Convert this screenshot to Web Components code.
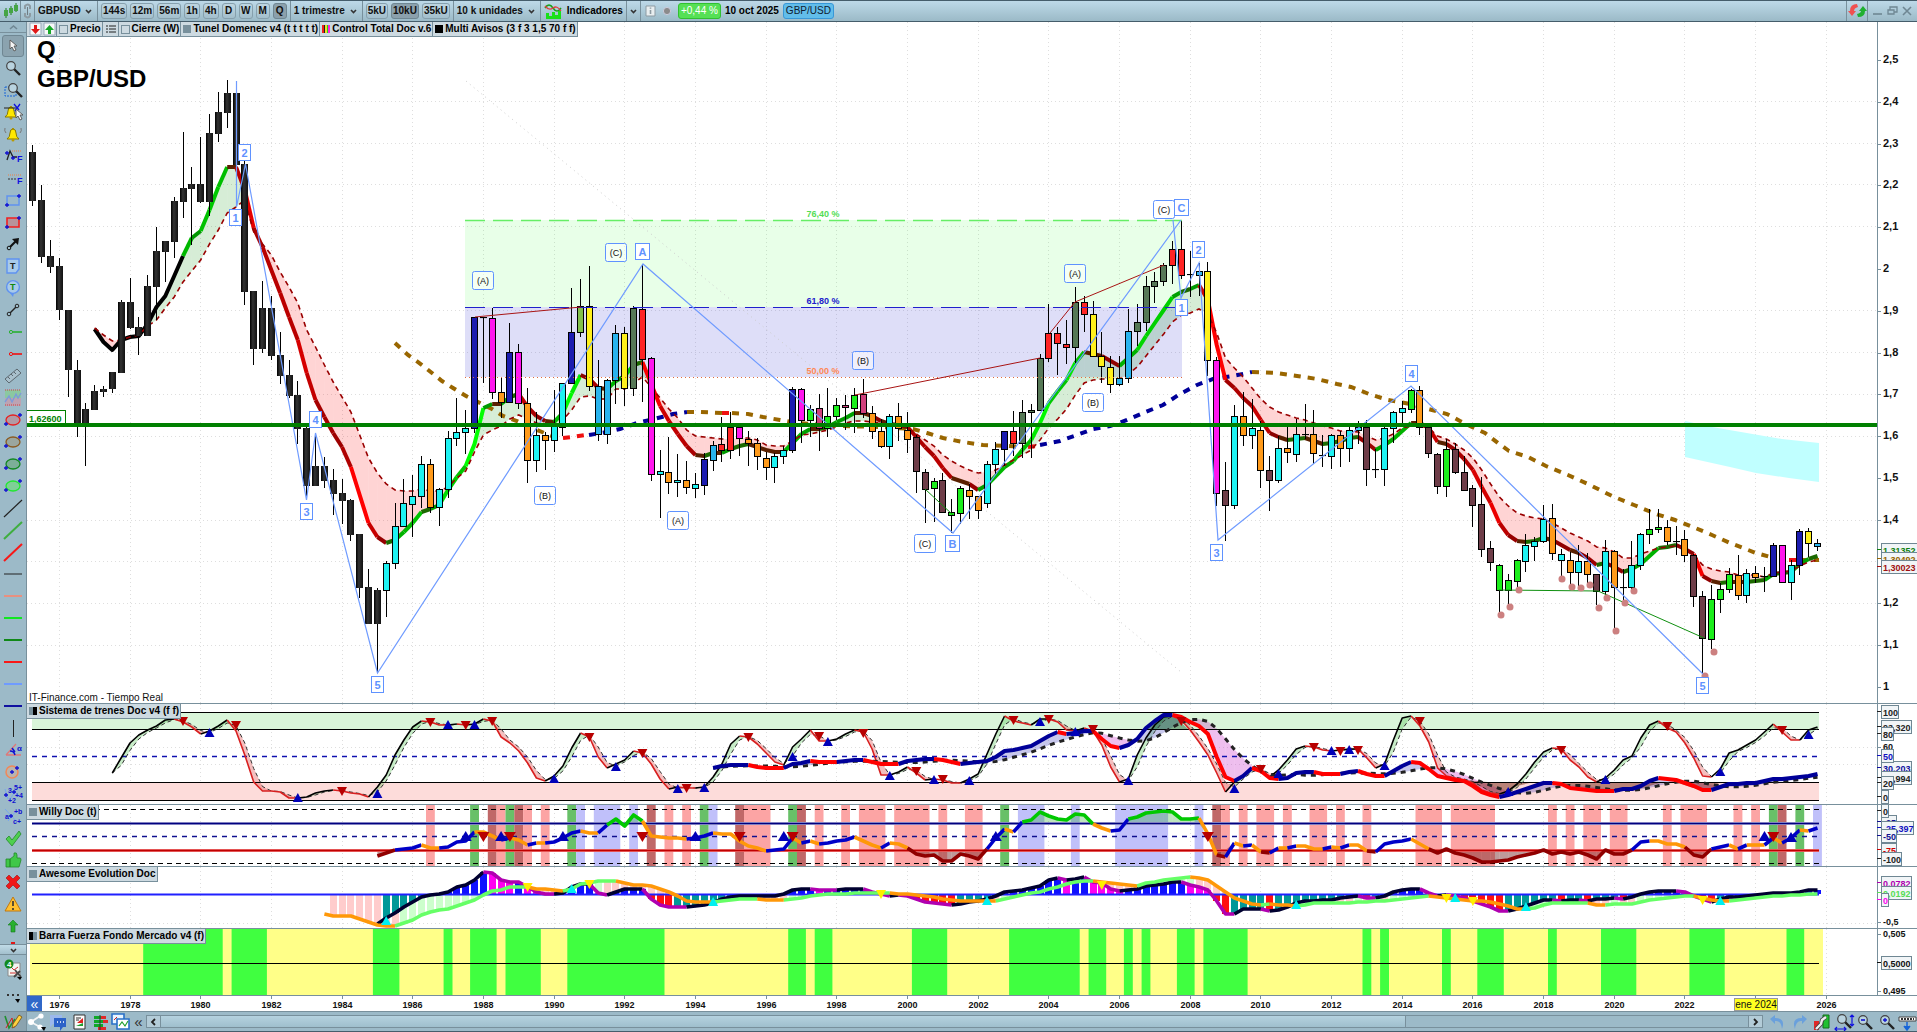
<!DOCTYPE html>
<html lang="es">
<head>
<meta charset="utf-8">
<title>GBP/USD</title>
<style>
    html, body {
        margin: 0;
        height: 100%;
        overflow: hidden;
        font: 10px/14px "Liberation Sans", Arial, sans-serif;
        color: #000;
    }
</style>
</head>
<body>
<chart-app></chart-app>

<script>
    // ---------- icons (27 x 22 box) ----------
    const plus = (x, y, c = '#1010d0') => `<path d="M${x - 2} ${y}h4M${x} ${y - 2}v4" stroke="${c}" stroke-width="1.3"/>`;
    const hline = (c, w = 2) => `<path d="M4 11h18" stroke="${c}" stroke-width="${w}"/>`;
    const diag = (c, w = 2) => `<path d="M4 20L22 3" stroke="${c}" stroke-width="${w}"/>`;
    const ellipse = (c, f) => `<ellipse cx="13" cy="11" rx="7" ry="5" fill="${f}" stroke="${c}" stroke-width="1.3"/>${plus(6, 15)}${plus(20, 6)}`;
    const glass = (x, y) => `<path d="M${x + 3} ${y + 3}l6 6" stroke="#222" stroke-width="2.4"/><circle cx="${x}" cy="${y}" r="4.3" fill="#b9d3df" stroke="#444" stroke-width="1.2"/>`;
    const bell = (x, y) => `<path d="M${x - 6} ${y + 5}q3-2 3-6q0-4 3-4t3 4q0 4 3 6z" fill="#ffe800" stroke="#8a7a00"/><circle cx="${x}" cy="${y + 6}" r="1.5" fill="#b89a00"/><path d="M${x - 1} ${y - 6}h2v2h-2z" fill="#a89000"/>`;
    const pointer = (x, y) => `<path d="M${x} ${y}v9l2-2 2 4 2-1-2-4h3z" fill="#f4f4f4" stroke="#555" stroke-width=".9"/>`;
    const letter = (x, y, t, c, s = 9) => `<text x="${x}" y="${y}" font-size="${s}" font-weight="700" fill="${c}">${t}</text>`;

    const ICONS = {
        cursor: pointer(10, 5),
        zoom: glass(11, 9),
        zoomArea: '<path d="M5 8h11v9H5z" fill="none" stroke="#1765d8" stroke-dasharray="2 1"/>' + glass(13, 9),
        alertTool: bell(11, 11) + '<path d="M4 7h13" stroke="#222"/><path d="M14 3l5 6M20 3l-5 7" stroke="#1010e0" stroke-width="1.3"/>' + pointer(16, 8),
        bell: bell(13, 11) + '<path d="M5 5q-1 3 1 5M21 5q1 3-1 5" stroke="#777" fill="none"/>',
        fibExt: '<path d="M12 6h9" stroke="#f08040" stroke-dasharray="1 1"/><path d="M7 15l3-9 3 6h4" fill="none" stroke="#222" stroke-width="1.3"/>' + plus(7, 8) + plus(13, 13) + letter(17, 17, 'F', '#1010e0'),
        fib: '<path d="M8 8h13" stroke="#f08040" stroke-dasharray="1 1"/><path d="M8 12h9" stroke="#333" stroke-dasharray="2 1"/>' + letter(17, 17, 'F', '#1010e0'),
        rectBlue: '<path d="M7 7h12v9H7z" fill="none" stroke="#5f92f0" stroke-width="1.4"/>' + plus(7, 16) + plus(19, 7),
        rectRed: '<path d="M7 7h12v9H7z" fill="#b8939b" stroke="#f02020" stroke-width="1.6"/>' + plus(7, 16) + plus(19, 7),
        arrow: '<circle cx="9" cy="15" r="1.8" fill="none" stroke="#111"/><path d="M10 14l6-6" stroke="#111" stroke-width="2.2"/><path d="M12 6l7-1-1 7z" fill="#111"/>',
        text: '<path d="M7 4h12v10l-3 4H7z" fill="#a8caea" stroke="#5f92f0" stroke-width="1.4"/>' + letter(10, 14, 'T', '#222'),
        note: '<circle cx="13" cy="10" r="6.4" fill="#a8caea" stroke="#5f92f0" stroke-width="1.4"/><path d="M10 16l3 4 1-4" fill="#5f92f0"/>' + letter(10, 13, 'T', '#118811'),
        segment: '<path d="M10 14l6-6" stroke="#222" stroke-width="1.4"/><circle cx="9" cy="15" r="1.8" fill="none" stroke="#222"/><circle cx="17" cy="7" r="1.8" fill="none" stroke="#222"/>',
        rayGreen: '<circle cx="11" cy="11" r="1.6" fill="none" stroke="#28b030"/><path d="M13 11h9" stroke="#28b030" stroke-width="1.6"/>',
        rayRed: '<circle cx="11" cy="11" r="1.6" fill="none" stroke="#f01010"/><path d="M13 11h9" stroke="#f01010" stroke-width="1.6"/>',
        ruler: '<path d="M5 14L17 4l4 4L9 18z" fill="#a9c0cc" stroke="#5c6870"/><path d="M8 12l2 2M11 9l2 2M14 7l2 2" stroke="#5c6870"/>',
        channel: '<path d="M5 3h16v8H5z" fill="#8bc8a0"/><path d="M5 11h16v8H5z" fill="#bda3b2"/><path d="M5 3h16M5 18h16" stroke="#d04040" stroke-dasharray="1 1"/><path d="M5 15l4-6 3 6 4-8 2 4 3-5" fill="none" stroke="#7d9bd8" stroke-width="1.4"/>',
        ellRed: ellipse('#e82020', '#b29aa4'),
        ellBrown: ellipse('#8a5a20', '#9ba69e'),
        ellGreen: ellipse('#118820', '#7cae98'),
        ellLime: ellipse('#20e830', '#7fcf96'),
        diagBlack: diag('#222', 1.2), diagGreen: diag('#3fae3f'), diagRed: diag('#f81818'),
        hBlack: hline('#222', 1), hSalmon: hline('#e89080'), hLime: hline('#10e820'), hGreen: hline('#108818'),
        hRed: hline('#f81818'), hSky: hline('#6f9bff'), hNavy: hline('#1010a0'),
        vline: '<path d="M13.5 3v17" stroke="#222"/>',
        angle: '<path d="M6 16h15M6 16L16 5" stroke="#e07878" stroke-width="1.3"/><path d="M10 12q4 0 5 4M12 9l3 4" fill="none" stroke="#1010d0" stroke-width="1.5"/>' + letter(17, 12, 'α', '#1010d0', 8),
        circle: '<circle cx="12" cy="11" r="6" fill="#b9b4ae" stroke="#f08858" stroke-width="1.5"/>' + plus(12, 11) + plus(17, 7),
        elliott: '<path d="M5 6l3 10M9 18l8-13M14 8l5 6" stroke="#78a5ef"/>' + letter(8, 10, '3', '#1010d0', 7) + letter(14, 7, '5+', '#1010d0', 7) + plus(6, 12) + plus(14, 9) + letter(8, 20, '+2', '#1010d0', 7) + letter(15, 15, '+4', '#1010d0', 7),
        abc: '<path d="M5 4l12 13M8 16l8-10" stroke="#78a5ef"/>' + letter(5, 14, 'a', '#1010d0', 7) + plus(11, 11) + letter(14, 9, '+b', '#1010d0', 7) + letter(13, 19, 'c+', '#1010d0', 7),
        check: '<path d="M6 12l3-3 3 4 7-9 2 3-9 12z" fill="#4fd050" stroke="#258a2a" stroke-width=".8"/>',
        thumb: '<path d="M6 10h4v8H6zM10 10l4-3V4q3-1 3 2v3h3q1 0 1 2l-2 7H10z" fill="#40c848" stroke="#258a2a" stroke-width=".8"/>',
        cross: '<path d="M6 7l3-3 4 4 4-4 3 3-4 4 4 4-3 3-4-4-4 4-3-3 4-4z" fill="#f01818" stroke="#a01010" stroke-width=".6"/>',
        warn: '<path d="M13 4l8 14H5z" fill="#ffc030" stroke="#c07810" stroke-linejoin="round"/><path d="M13 8v5M13 15v2" stroke="#333" stroke-width="1.6"/>',
        up: '<path d="M13 5l5 5h-3v7h-4v-7H8z" fill="#28b030" stroke="#157a1c" stroke-width=".6"/>',
        down: '<path d="M11 5h4v7h3l-5 5-5-5h3z" fill="#e01818"/>',
        orders: '<path d="M8 5h12v13H8z" fill="#f2f5f2" stroke="#888"/><path d="M10 8l4 4 4-3M10 15h7" stroke="#d03030" fill="none"/><path d="M15 12l6 7M14 19l6-6" stroke="#444" stroke-width="1.8"/><circle cx="9" cy="6" r="4.5" fill="#118a20"/>' + letter(7, 9, '4', '#fff', 8) + '<path d="M17 19h5l-2 3z" fill="#000"/>',
        more: '<path d="M7 8h2v2H7zM12 8h2v2h-2zM17 8h2v2h-2z" fill="#333"/><path d="M15 13h5l-2 4z" fill="#000"/>',
        pencil: '<path d="M5 5l4 12 6-9" fill="none" stroke="#209030" stroke-width="1.6"/><path d="M6 17l6-10 2 10" fill="none" stroke="#d02020"/><path d="M12 17l1-4 6-9 3 2-6 9z" fill="#ffd040" stroke="#705010" stroke-width=".8"/>',
        share: '<path d="M16 5L7 11l9 5" stroke="#f5f5f5" stroke-width="1.8" fill="none"/><circle cx="17" cy="5" r="2.6" fill="#fff"/><circle cx="7" cy="11" r="3" fill="#fff"/><circle cx="16" cy="16" r="2.6" fill="#fff"/><path d="M17 16h5l-2 4z" fill="#000"/>',
        chat: '<path d="M5 4h12v9H8l-3 3z" fill="#9cb8ec"/><path d="M9 7h12v9h-3l-3 4v-4H9z" fill="#2d62c8"/><path d="M12 11h1M15 11h1M18 11h1" stroke="#fff" stroke-width="1.4"/>',
        report: '<path d="M8 4h11v14H8z" fill="#fafafa" stroke="#333"/><path d="M10 7h5M10 9h3" stroke="#333"/><path d="M11 12l6-5v5z" fill="#e02020"/><path d="M10 15h7v-3z" fill="#20a030"/>',
        book: '<path d="M7 5h8v3H7zM7 9h12v3H7zM7 13h9v3H7z" fill="#10a828"/><path d="M14 5h5v3h-5zM16 9h5v3h-5zM11 16h8v3h-8z" fill="#e02828"/><path d="M13 4v15" stroke="#333"/>',
        windows: '<path d="M5 3h12v10H5z" fill="#e8f4ff" stroke="#2870c8" stroke-width="1.6"/><path d="M10 8h12v10H10z" fill="#fff" stroke="#2870c8" stroke-width="1.6"/><path d="M12 15l3-4 3 4 3-5" fill="none" stroke="#20a030" stroke-width="1.2"/><path d="M7 9l3-3" stroke="#d02020"/>',
        undo: '<path d="M11 4L6 8l5 5v-3q6-1 7 8q4-11-7-11z" fill="#6aa0dc"/>',
        redo: '<path d="M16 4l5 4-5 5v-3q-6-1-7 8q-4-11 7-11z" fill="#6aa0dc"/>',
        settings: '<path d="M6 10h5v9H6z" fill="#e02828"/><path d="M15 4h6v13h-6z" fill="#20c030" stroke="#117018"/><path d="M8 18l5-5 1-4 4-3" stroke="#444" stroke-width="4"/><path d="M8 18l5-5 1-4 4-3" stroke="#eee" stroke-width="2.4"/>',
        fit: glass(12, 8) + '<path d="M22 4v11M20 6l2-2 2 2M20 13l2 2 2-2M5 18h11M7 16l-2 2 2 2M14 16l2 2-2 2" fill="none" stroke="#1010e0" stroke-width="1.2"/>',
        zoomOut: glass(12, 9) + '<path d="M10 9h4" stroke="#1010d0" stroke-width="1.6"/>',
        zoomIn: glass(12, 9) + plus(12, 9),
        keyboard: '<path d="M5 6h17v4H5z" fill="#fff" stroke="#444"/><path d="M7 8h13" stroke="#333" stroke-width="2" stroke-dasharray="2 1"/><path d="M13 11v6M10 15l3 4 3-4" stroke="#1765d8" fill="#1765d8" stroke-width="1.5"/>',
        candles: '<path d="M9 8v10M14 6v9M19 3v9" stroke="#1d7a1d"/><path d="M7 10h4v6H7zM12 8h4v5h-4zM17 5h4v6h-4z" fill="#45a545"/>',
        link: '<path d="M11 9V6q3-3 5 0v3M11 13v3q3 3 5 0v-3" fill="none" stroke="#8d9ba2" stroke-width="2"/><path d="M13.5 7v8" stroke="#6d7b82"/>',
        indicators: '<path d="M5 8q4-6 8 0t8 0" fill="none" stroke="#15a015" stroke-width="1.5"/><path d="M5 6q4 5 8 2t8 3" fill="none" stroke="#e04040" stroke-width="1.3"/><path d="M6 19v-6h3v3h3v-4h3v3h3v-4h3v8z" fill="#18e018"/>',
        info: '<path d="M9 6h9v10H9z" fill="#e8eef0" stroke="#8d9ba2"/><path d="M13.5 10v4M13.5 7.500v1.200" stroke="#8d9ba2" stroke-width="1.6"/>',
        dot: '<circle cx="13" cy="11" r="3.6" fill="#8b8b8b" stroke="#ccd"/>',
        sync: '<path d="M13 4q-7 0-7 7H4l4 5 4-5h-2q0-3 4-4z" fill="#f05050"/><path d="M14 17q7 0 7-6h2l-4-5-4 5h2q0 2-4 3z" fill="#20b030"/>',
        sheetDown: '<path d="M8 5h11v12H8z" fill="#f6f8f8" stroke="#9ab"/><path d="M12 7h3v4h3l-4.500 5-4.500-5h3z" fill="#e01818"/>',
        sheetUp: '<path d="M8 5h11v12H8z" fill="#f6f8f8" stroke="#9ab"/><path d="M12 16h3v-4h3l-4.500-5-4.500 5h3z" fill="#18a828"/>',
        list: '<path d="M9 8h2M9 11h2M9 14h2M12 8h7M12 11h7M12 14h7" stroke="#222" stroke-width="1.2"/>',
        minimize: '<path d="M9 14h9" stroke="#6f8793" stroke-width="1.600"/>',
        restore: '<path d="M9 10h6v4H9zM11 10V7h7v5h-3" fill="none" stroke="#6f8793" stroke-width="1.300"/>',
        close: '<path d="M9 7l8 8M17 7l-8 8" stroke="#6f8793" stroke-width="1.600"/>',
        chevronDown: '<path d="M11 10l2.500 2.500 2.500-2.500" fill="none" stroke="#333" stroke-width="1.600"/>',
        chevronUp: '<path d="M10 13l3.500-3 3.500 3" fill="none" stroke="#6f8793" stroke-width="1.600"/>',
        chevronLeft: '<path d="M15 8l-3 3 3 3" fill="none" stroke="#222" stroke-width="1.800"/>',
        chevronRight: '<path d="M12 8l3 3-3 3" fill="none" stroke="#222" stroke-width="1.800"/>'
    };

    class AppIcon extends HTMLElement {
        connectedCallback() {
            if (this.shadowRoot) return;
            this.attachShadow({ mode: 'open' }).innerHTML = `
                <style>
                    :host { display: flex; justify-content: center; width: 27px; height: 22px; flex: none; pointer-events: none; }
                    svg { display: block; width: 27px; height: 22px; flex: none; font-family: "Liberation Sans", Arial, sans-serif; }
                </style>
                <svg viewBox="0 0 27 22" fill="none" aria-hidden="true">${ICONS[this.getAttribute('name')]}</svg>
            `;
        }
    }

    class ToolButton extends HTMLElement {
        connectedCallback() {
            this.attachShadow({ mode: 'open' }).innerHTML = `
                <style>
                    :host { display: block; flex: none; }
                    button {
                        display: block;
                        box-sizing: border-box;
                        height: 16px;
                        min-width: 14px;
                        margin: 0;
                        padding: 0 1px;
                        border: 1px solid #86a0ad;
                        border-radius: 3px;
                        background: linear-gradient(#bfd6e1, #a3bfcc);
                        font: bold 10px/14px "Liberation Sans", Arial, sans-serif;
                        color: #111;
                    }
                    :host([pressed]) button { background: #8ba0ac; border-color: #6f8793; }
                </style>
                <button aria-pressed="${this.hasAttribute('pressed')}"><slot></slot></button>
            `;
        }
    }

    class ToolSelect extends HTMLElement {
        connectedCallback() {
            this.attachShadow({ mode: 'open' }).innerHTML = `
                <style>
                    :host { display: flex; align-items: center; flex: none; }
                    select {
                        appearance: none;
                        margin: 0;
                        padding: 0;
                        border: 0;
                        background: none;
                        font: bold 10px/14px "Liberation Sans", Arial, sans-serif;
                        color: #111;
                    }
                    app-icon { width: 11px; margin-left: 2px; }
                </style>
                <select aria-label="${this.getAttribute('label')}"><option>${this.getAttribute('value')}</option></select>
                <app-icon name="chevronDown"></app-icon>
            `;
        }
    }

    class TopBar extends HTMLElement {
        connectedCallback() {
            this.attachShadow({ mode: 'open' }).innerHTML = `
                <style>
                    :host {
                        display: flex;
                        box-sizing: border-box;
                        height: 22px;
                        flex: none;
                        border-top: 1px solid #455d6b;
                        border-bottom: 1px solid #455d6b;
                        background: linear-gradient(#bdd9e8, #9bbac7);
                        font-weight: 700;
                    }
                    .group {
                        display: flex;
                        align-items: center;
                        gap: 3px;
                        padding: 0 3px;
                        border-right: 1px solid #78909c;
                    }
                    .tight { padding: 0; }
                    .last { border: 0; flex: 1; gap: 4px; }
                    .sync { border-left: 1px solid #78909c; }
                    .badge {
                        padding: 0 2px;
                        border: 1px solid #30c030;
                        border-radius: 3px;
                        background: #55e055;
                        color: #fff;
                        font-weight: 400;
                    }
                    .pair { border-color: #3898d8; background: #62bdea; color: #102030; }
                    .chip { width: 13px; }
                    .square { width: 13px; }
                    .wide { width: 20px; }
                    button { display: flex; margin: 0; padding: 0; border: 0; background: none; }
                </style>
                <div class="group tight"><button aria-label="Gráfico"><app-icon class="wide" name="candles"></app-icon></button></div>
                <div class="group tight"><button aria-label="Vincular"><app-icon class="square" name="link"></app-icon></button></div>
                <div class="group"><tool-select label="Valor" value="GBPUSD"></tool-select></div>
                <div class="group">
                    ${['144s', '12m', '56m', '1h', '4h', 'D', 'W', 'M', 'Q'].map(t => `<tool-button ${t === 'Q' ? 'pressed' : ''}>${t}</tool-button>`).join('')}
                </div>
                <div class="group"><tool-select label="Intervalo" value="1 trimestre"></tool-select></div>
                <div class="group">
                    <tool-button>5kU</tool-button><tool-button pressed>10kU</tool-button><tool-button>35kU</tool-button>
                </div>
                <div class="group"><tool-select label="Unidades" value="10 k unidades"></tool-select></div>
                <div class="group"><app-icon class="wide" name="indicators"></app-icon><span>Indicadores</span></div>
                <div class="group tight"><button aria-label="Más indicadores"><app-icon class="square" name="chevronDown"></app-icon></button></div>
                <div class="group last">
                    <app-icon name="info" class="chip"></app-icon>
                    <app-icon name="dot" class="chip"></app-icon>
                    <span class="badge">+0,44 %</span>
                    <span>10 oct 2025</span>
                    <span class="badge pair">GBP/USD</span>
                </div>
                <div class="group tight sync"><button aria-label="Sincronizar"><app-icon class="wide" name="sync"></app-icon></button></div>
                <div class="group last" style="flex:none;gap:2px">
                    <button aria-label="Minimizar"><app-icon class="square" name="minimize"></app-icon></button>
                    <button aria-label="Restaurar"><app-icon class="square" name="restore"></app-icon></button>
                    <button aria-label="Cerrar"><app-icon class="square" name="close"></app-icon></button>
                </div>
            `;
        }
    }

    class SideTools extends HTMLElement {
        connectedCallback() {
            const tools = ['cursor', 'zoom', 'zoomArea', 'alertTool', 'bell', 'fibExt', 'fib', 'rectBlue', 'rectRed', 'arrow',
                'text', 'note', 'segment', 'rayGreen', 'rayRed', 'ruler', 'channel', 'ellRed', 'ellBrown', 'ellGreen', 'ellLime',
                'diagBlack', 'diagGreen', 'diagRed', 'hBlack', 'hSalmon', 'hLime', 'hGreen', 'hRed', 'hSky', 'hNavy', 'vline',
                'angle', 'circle', 'elliott', 'abc', 'check', 'thumb', 'cross', 'warn', 'up', 'down'];
            this.attachShadow({ mode: 'open' }).innerHTML = `
                <style>
                    :host {
                        display: flex;
                        flex-direction: column;
                        box-sizing: border-box;
                        width: 27px;
                        flex: none;
                        border-right: 1px solid #78909c;
                        background: #9cbac8;
                    }
                    button {
                        display: flex;
                        justify-content: center;
                        align-items: center;
                        box-sizing: border-box;
                        width: 26px;
                        height: 22px;
                        margin: 0;
                        padding: 0;
                        border: 0;
                        background: none;
                        flex: none;
                    }
                    .fold { height: 11px; overflow: hidden; border-bottom: 1px solid #78909c; }
                    .unfold { border-top: 1px solid #78909c; background: linear-gradient(#c0dbe7, #a3c0cd); }
                    .tools { flex: 1; min-height: 0; overflow: hidden; display: flex; flex-direction: column; padding-top: 2px; }
                    .on { border: 1px solid #6f8793; border-radius: 3px; background: #8ba3af; width: 22px; margin-left: 2px; }
                    .end { height: 28px; }
                </style>
                <button class="fold" aria-label="Subir"><app-icon name="chevronUp"></app-icon></button>
                <div class="tools">
                    ${tools.map((t, i) => `<button class="${i ? '' : 'on'}" aria-label="${t}"><app-icon name="${t}"></app-icon></button>`).join('')}
                </div>
                <button class="fold unfold" aria-label="Bajar"><app-icon name="chevronDown"></app-icon></button>
                <button class="end" aria-label="Órdenes"><app-icon name="orders"></app-icon></button>
                <button class="end" aria-label="Más"><app-icon name="more"></app-icon></button>
            `;
        }
    }

    class BottomBar extends HTMLElement {
        connectedCallback() {
            const btn = (name, w) => `<button aria-label="${name}" style="width:${w}px"><app-icon name="${name}"></app-icon></button>`;
            this.attachShadow({ mode: 'open' }).innerHTML = `
                <style>
                    :host {
                        display: flex;
                        align-items: center;
                        box-sizing: border-box;
                        height: 21px;
                        flex: none;
                        overflow: hidden;
                        border-top: 1px solid #78909c;
                        border-bottom: 1px solid #455d6b;
                        background: #9cbac8;
                    }
                    button {
                        display: flex;
                        justify-content: center;
                        align-items: center;
                        box-sizing: border-box;
                        height: 20px;
                        margin: 0;
                        padding: 0;
                        border: 0;
                        background: none;
                        flex: none;
                    }
                    .draw { width: 27px; background: #8ba3af; border-right: 1px solid #78909c; }
                    .more { width: 15px; font: 15px/14px "Liberation Sans", Arial, sans-serif; color: #333; }
                    .scroll {
                        display: flex;
                        flex: 1;
                        box-sizing: border-box;
                        height: 13px;
                        border: 1px solid #78909c;
                        background: #9cbac8;
                        overflow: hidden;
                    }
                    .scroll button { width: 13px; height: 11px; background: #b3ccd8; }
                    .thumb { flex: 1247; border: solid #78909c; border-width: 0 1px; background: linear-gradient(#b5d2df, #9fbfcd); }
                    .rest { flex: 343; border-right: 1px solid #78909c; }
                    .end { display: flex; padding-left: 3px; }
                </style>
                <button class="draw" aria-label="Dibujar"><app-icon name="pencil"></app-icon></button>
                ${btn('share', 21)}${btn('chat', 21)}${btn('report', 21)}${btn('book', 20)}${btn('windows', 21)}
                <button class="more" aria-label="Plegar">«</button>
                <div class="scroll" role="scrollbar" aria-label="Historial" aria-valuenow="100">
                    <button aria-label="Anterior"><app-icon name="chevronLeft"></app-icon></button>
                    <div class="thumb"></div><div class="rest"></div>
                    <button aria-label="Siguiente"><app-icon name="chevronRight"></app-icon></button>
                </div>
                <div class="end">
                    ${btn('undo', 22)}${btn('redo', 22)}${btn('settings', 22)}${btn('fit', 22)}${btn('zoomOut', 21)}${btn('zoomIn', 22)}${btn('keyboard', 20)}
                </div>
            `;
        }
    }

    class LegendItem extends HTMLElement {
        connectedCallback() {
            const swatch = this.getAttribute('swatch');
            const check = this.hasAttribute('check');
            const tag = check ? 'label' : 'span';
            this.attachShadow({ mode: 'open' }).innerHTML = `
                <style>
                    :host {
                        display: block;
                        box-sizing: border-box;
                        height: 15px;
                        border: solid #78909c;
                        border-width: 0 1px 1px 0;
                        background: #cddae1;
                        font: bold 10px/14px "Liberation Sans", Arial, sans-serif;
                        white-space: nowrap;
                    }
                    .row { display: flex; align-items: center; gap: 2px; height: 14px; padding: 0 1px 0 2px; }
                    i { width: 8px; height: 8px; background: ${swatch || 'none'}; }
                    input { appearance: none; box-sizing: border-box; width: 9px; height: 9px; margin: 0; border: 1px solid #78909c; }
                </style>
                <${tag} class="row">${check ? '<input type="checkbox">' : ''}${swatch ? '<i></i>' : ''}<slot></slot></${tag}>
            `;
        }
    }

    // ---------- chart geometry ----------
    const LEFT = 27, PLOT = 1850, AXIS = 40, LAST = 199;
    const QUARTER = 8.835, START = 59.3;       // 1976 Q1
    const qx = q => START + QUARTER * q;
    const nums = s => s.trim().split(/\s+/).map(Number);

    class ChartPanel extends HTMLElement {
        connectedCallback() {
            this.attachShadow({ mode: 'open' }).innerHTML = `
                <style>
                    :host {
                        display: block;
                        position: relative;
                        flex: ${this.bottom - this.top} 1 0;
                        min-height: 0;
                        border-bottom: 1px solid #78909c;
                        background: #fff;
                        overflow: hidden;
                    }
                    svg { position: absolute; inset: 0; width: 100%; height: 100%; }
                    text { font-family: "Liberation Sans", Arial, sans-serif; }
                    .legend { position: absolute; top: 0; left: 0; display: flex; }
                </style>
                <svg></svg>
                <div class="legend"><slot></slot></div>
            `;
            new ResizeObserver(() => this.draw()).observe(this);
            this.draw();
        }

        get top() { return this.constructor.range[0]; }
        get bottom() { return this.constructor.range[1]; }

        draw() {
            this.w = this.clientWidth;
            this.h = this.clientHeight;
            if (!this.w || !this.h) return;
            this.shadowRoot.querySelector('svg').innerHTML = this.paint();
        }

        x(v) { return Math.round((v - LEFT) * (this.w - AXIS) / PLOT * 10) / 10; }
        y(v) { return Math.round((v - this.top) * this.h / (this.bottom - this.top) * 10) / 10; }
        q(v) { return this.x(qx(v)); }
        pts(list) { return list.map(([a, b]) => `${this.x(a)},${this.y(b)}`).join(' '); }

        line(list, color, w = 1, extra = '') {
            return `<polyline points="${this.pts(list)}" fill="none" stroke="${color}" stroke-width="${w}" ${extra}/>`;
        }
        area(list, color) { return `<polygon points="${this.pts(list)}" fill="${color}"/>`; }
        level(v, color, w = 1, extra = '', from = 32, to = 1819) {
            return this.line([[from, v], [to, v]], color, w, extra);
        }
        rect(x1, y1, x2, y2, color) {
            const a = this.x(x1), b = this.y(y1);
            return `<rect x="${a}" y="${b}" width="${this.x(x2) - a}" height="${this.y(y2) - b}" fill="${color}"/>`;
        }
        text(px, py, t, size, color = '#111', anchor = 'start', weight = 700) {
            return `<text x="${px}" y="${py}" font-size="${size}" font-weight="${weight}" fill="${color}" text-anchor="${anchor}">${t}</text>`;
        }

        // vertical lines every two years
        years() {
            let s = '';
            for (let q = 0; q <= 200; q += 8) {
                const a = Math.floor(this.q(q)) + 0.5;
                s += `<path d="M${a} 0V${this.h}" stroke="#dedede" stroke-dasharray="1 3"/>`;
            }
            return s;
        }
        hgrid(list) {
            return list.map(v => this.level(Math.floor(v) + 0.5, '#dedede', 1, 'stroke-dasharray="1 3"', 27, 1877)).join('');
        }
        axis() {
            const a = this.w - AXIS + 0.5;
            return `<rect x="${a - 0.5}" y="0" width="${AXIS}" height="${this.h}" fill="#fff"/><path d="M${a} 0V${this.h}" stroke="#78909c"/>`;
        }
        tick(v, t, size, color) {
            const a = this.w - AXIS;
            return `<path d="M${a} ${Math.round(this.y(v)) + 0.5}h4" stroke="#78909c"/>` + this.text(a + 6, this.y(v) + 3, t, size, color);
        }
        tag(v, t, color, width) {
            const a = this.w - AXIS + 4.5, b = Math.round(this.y(v)) - 6.5;
            return `<path d="M${a - 4.5} ${b + 6}h4" stroke="${color}"/><rect x="${a}" y="${b}" width="${width}" height="13" fill="#f1f5f7" stroke="#6f8793"/>` +
                this.text(a + 1.5, b + 10, t, 9, color);
        }
        up(q, v, color, r = 5) {
            const a = this.q(q), b = this.y(v);
            return `<path d="M${a} ${b - r}l${r} ${r + 4}h${-2 * r}z" fill="${color}"/>`;
        }
        dn(q, v, color, r = 5) {
            const a = this.q(q), b = this.y(v);
            return `<path d="M${a} ${b + r}l${r} ${-r - 4}h${-2 * r}z" fill="${color}"/>`;
        }
        marks(list, kind, color, r) {
            return list.map(([q, v]) => this[kind](q, v, color, r)).join('');
        }
        // consecutive segments that share a colour become one polyline
        coloured(list, from, width, pick) {
            let s = '', run = [[qx(from), list[0]]], last = null;
            for (let i = 1; i < list.length; i++) {
                const c = pick(list[i - 1], list[i], from + i, last);
                if (last && c !== last) {
                    s += this.line(run, last, width, 'stroke-linejoin="round"');
                    run = [[qx(from + i - 1), list[i - 1]]];
                }
                run.push([qx(from + i), list[i]]);
                last = c;
            }
            return s + this.line(run, last, width, 'stroke-linejoin="round"');
        }
        between(a, b, from, above, below) {
            let s = '';
            for (let i = 1; i < a.length; i++) {
                const x1 = qx(from + i - 1), x2 = qx(from + i);
                const c = a[i] + a[i - 1] < b[i] + b[i - 1] ? above : below;
                s += this.area([[x1, a[i - 1]], [x2, a[i]], [x2, b[i]], [x1, b[i - 1]]], c);
            }
            return s;
        }
    }

    // colour, high, body top, body bottom, low; one per quarter from 1975 Q2
    const CANDLES = `k145 152 201 206|k185 200 257 263|k240 256 267 273|k258 266 310 320|k310 310 370 397|k360 370 423 437|k403 409 423 466|k385 391 410 410|k386 389 392 397|k372 372 389 393|
        k300 302 373 373|k278 302 328 329|k317 327 336 355|k275 286 336 336|k227 251 287 320|k241 241 252 282|k197 201 242 258|k132 188 202 218|k167 184 189 245|k137 184 202 203|
        k114 133 202 216|k92 112 134 142|k80 93 113 128|k93 93 165 165|k161 164 292 305|k291 291 349 365|k281 308 349 353|k296 308 356 360|k332 355 376 384|k360 375 396 398|
        k381 395 429 444|k427 428 486 500|k433 466 486 486|k457 466 481 488|k469 480 494 515|k479 493 501 524|k499 500 535 541|k534 534 588 598|k569 587 624 624|k588 590 624 673|
        c561 563 590 617|c503 526 563 569|c479 503 526 527|c475 496 504 537|c456 464 496 508|o459 464 507 513|c488 489 507 526|c431 438 489 498|c398 432 438 446|c410 428 432 454|
        b317 317 428 433|x317 317 318 383|m308 318 392 399|o378 392 402 418|b323 352 402 402|m344 352 403 409|o388 403 460 483|c412 435 460 472|o432 435 440 470|c390 425 440 452|
        c383 383 427 436|b288 332 383 383|v279 306 332 337|y266 306 386 391|s360 386 434 441|s379 380 434 444|s325 333 380 404|y327 333 388 406|d306 308 388 396|r264 309 359 402|
        m357 358 474 481|c450 471 474 518|o437 472 482 494|c454 480 482 497|o461 480 487 494|c473 484 488 498|b453 459 485 495|s441 445 460 471|r417 444 450 462|r412 427 450 459|
        m427 427 438 456|o431 439 443 466|o438 443 456 470|o452 458 467 480|c453 456 467 483|c446 450 456 464|b387 389 450 453|m388 389 420 443|g405 409 420 437|w394 408 428 451|
        g388 416 428 437|g398 405 416 420|w395 405 407 430|g388 395 408 433|w379 394 413 418|o406 413 431 439|o419 431 446 448|c414 416 446 459|o403 416 428 441|o412 430 439 453|
        p435 437 471 493|p469 472 489 523|g478 481 488 522|p473 480 512 513|g499 512 515 533|g486 488 513 524|o484 490 496 519|o496 496 510 519|c461 464 503 508|c442 449 464 474|
        b431 431 449 466|r411 431 443 456|d400 412 443 458|d404 410 412 458|d354 358 410 410|r304 333 358 362|r327 333 343 375|r320 344 347 364|d287 302 347 363|r296 302 314 332|
        y301 314 356 357|y332 356 366 383|y356 367 384 393|s356 378 384 386|s309 331 378 383|d304 322 331 346|d276 286 322 331|d272 281 286 303|d263 265 281 286|r241 249 265 284|
        r220 249 275 279|x251 274 275 297|s263 271 275 296|y262 271 360 376|m357 360 493 506|p462 490 505 541|c405 416 505 509|o392 416 435 446|c399 428 435 449|o421 430 470 488|
        p456 470 480 511|c436 448 480 483|o427 448 452 463|c419 434 454 462|x404 434 435 439|o410 434 453 464|x435 455 456 467|c434 435 456 469|o431 435 448 467|c427 430 448 462|
        c421 427 430 444|p420 427 469 486|x449 469 470 478|c427 428 469 486|c411 412 428 443|c401 408 412 424|g389 390 409 413|o386 390 427 435|p426 427 453 458|p453 454 486 494|
        g439 449 486 497|p443 449 472 474|p456 472 490 490|p485 488 505 527|p477 504 549 557|p541 548 562 571|g564 565 590 613|g574 580 590 605|g559 560 581 588|c534 545 561 572|
        c537 541 546 561|c505 519 541 543|o504 518 553 560|c549 554 560 577|o552 560 572 585|c545 561 572 586|o553 561 574 583|p574 574 591 605|c540 551 591 596|o550 551 587 629|
        x569 587 588 601|c541 565 587 589|c533 534 565 570|g509 529 534 544|g509 527 529 533|o520 527 541 545|x526 541 542 555|o530 539 555 562|p554 555 596 607|p591 596 638 674|
        g585 599 639 649|g583 589 599 613|g568 574 589 593|o555 575 595 600|c569 573 595 603|o566 573 577 583|x567 576 577 592|b543 545 576 577|m545 545 582 583|c560 565 582 600|
        b529 531 565 575|y528 531 543 557|s539 543 546 551`.split('|').map(t => {
            t = t.trim();
            return [t[0], ...nums(t.slice(1))];
        });
    const BODY = {
        k: 'url(#ink)', c: '#1ff2f2', o: '#ff9a1a', b: '#1c1cb0', m: '#ff16ee', y: '#fff01c', r: '#ff2424', g: '#1cee1c',
        s: '#2ab4ee', d: '#567856', p: '#6e3d48', v: '#82c04a', w: '#d0407c', x: '#000'
    };

    const FAST = nums(`329 342 350 340 337 336 324 307 296 276 256 238 231 210 187 167 167 190 228 247 270 293 317 340 373 400 417 433 447 467 495 523 537 543 540 532 523
        512 509 505 490 477 466 444 408 404 404 397 394 407 416 421 422 413 393 375 379 388 389 381 376 365 362 384 406 421 434 446 455 456 453 453 449 446 444 447 450 452 452
        443 434 429 429 427 422 418 413 413 416 421 424 425 427 437 447 456 468 478 481 484 490 485 476 467 461 450 440 423 403 391 380 363 352 354 356 361 366 358 350 336 323
        310 297 292 289 285 300 345 380 388 398 406 420 433 437 440 439 438 441 444 443 441 438 437 443 450 445 439 431 423 423 428 442 444 450 459 470 487 503 523 535 541 542
        541 538 540 545 550 553 558 565 563 567 572 569 564 556 548 547 545 549 554 576 581 583 582 582 582 581 580 574 573 572 564 559 556`);
    const TRAIL = nums(`328 335 341 340 337 335 326 320 308 297 282 271 260 244 230 213 207 200 232 244 255 272 287 303 330 347 365 382 397 412 435 458 473 484 490 491 491
        489 491 491 487 478 471 452 435 430 426 419 415 419 423 425 426 420 410 397 396 399 399 389 389 383 377 387 398 409 418 430 436 437 438 439 439 438 438 440 445 446 446
        441 435 434 432 430 427 423 421 421 422 423 425 426 429 434 440 446 455 461 466 470 473 472 470 465 460 455 450 440 428 419 409 395 383 380 379 379 379 374 367 356 345
        334 322 315 313 309 314 333 358 368 377 388 399 407 412 415 418 420 423 426 428 431 431 432 436 440 438 434 428 426 426 428 436 439 444 450 458 470 484 497 506 513 516
        518 519 523 528 533 537 541 547 548 552 558 558 554 551 548 547 546 549 555 565 569 571 572 575 575 575 577 573 572 571 566 562 560`);
    const LONG = [
        ['#996600', '395 343 408 355 422 365 432 373 442 381 453 388 466 396 480 403 492 409 503 416 517 421 530 427 542 432 554 437'],
        ['#f01010', '563 438 572 437 585 435'],
        ['#000099', '589 435 607 432 620 429 637 423 650 420 662 417 673 414 687 412'],
        ['#996600', '687 412 700 412 722 413'], ['#f01010', '722 413 730 413'],
        ['#996600', '732 413 748 414 763 417 780 420 797 423 840 426 880 427 913 429 927 433 943 438 963 442 983 445 1007 446 1024 447'],
        ['#f01010', '1028 447 1038 446'],
        ['#000099', '1040 445 1060 441 1077 435 1093 429 1110 426 1127 420 1143 413 1163 405 1180 394 1197 385 1213 379 1233 376 1252 372'],
        ['#996600', '1252 372 1277 373 1297 376 1317 379 1337 384 1351 387 1369 394 1388 400 1410 404 1432 410 1447 414 1460 421 1472 427 1485 433 1498 443 1509 451 1528 457 1546 466 1568 475 1590 485 1612 496 1634 505 1656 514 1675 520 1693 527 1712 535 1730 543 1756 553 1774 558'],
        ['#f01010', '1789 560 1800 560'], ['#996600', '1800 560 1819 560']
    ];
    const pairs = s => {
        const n = nums(s), r = [];
        for (let i = 0; i < n.length; i += 2) r.push([n[i], n[i + 1]]);
        return r;
    };

    class PriceChart extends ChartPanel {
        static range = [22, 703];

        slope(a, b, q) {
            if (q < 15) return '#000';
            const d = a - b, k = q < 34 ? 3 : 6;
            if (d > 3) return `rgb(0,${Math.min(255, 130 + Math.round(d) * k)},0)`;
            if (d > 0) return '#1c6a00';
            if (d > -4) return '#5a2000';
            return `rgb(${Math.min(255, 115 + Math.round(-d) * k)},0,0)`;
        }

        candles() {
            return CANDLES.map(([c, hi, top, low, lo], i) => {
                const cx = Math.floor(this.q(i - 3));
                const y1 = Math.round(this.y(top)), y2 = Math.round(this.y(low));
                const wick = `<path d="M${cx + 0.5} ${this.y(hi)}V${this.y(lo)}" stroke="#000"/>`;
                const body = c === 'k'
                    ? `<rect x="${cx - 3}" y="${y1}" width="7" height="${y2 - y1}" fill="${BODY[c]}"/>`
                    : `<rect x="${cx - 2.5}" y="${y1 + 0.5}" width="6" height="${Math.max(0.1, y2 - y1 - (c === 'x' ? 1 : 0))}" fill="${BODY[c]}" stroke="#000"/>`;
                return wick + body;
            }).join('');
        }

        box(cx, cy, t) {
            const a = Math.round(this.x(cx)), b = Math.round(this.y(cy)), w = /\d/.test(t) ? 12 : 14;
            return `<rect x="${a - w / 2 + 0.5}" y="${b - 8.5}" width="${w}" height="16" fill="#fff" stroke="#5f92ff"/>` +
                this.text(a + 0.5, b + 4, t, 11, '#5f92ff', 'middle');
        }
        wave(cx, cy, t) {
            const a = Math.round(this.x(cx)), b = Math.round(this.y(cy));
            return `<rect x="${a - 10.5}" y="${b - 8.5}" width="21" height="18" rx="2" fill="#fff" fill-opacity=".5" stroke="#5f92ff"/>` +
                this.text(a, b + 4, `(${t})`, 9, '#111', 'middle', 400);
        }

        paint() {
            const red = '#a81414', blue = '#6f9bff';
            let s = '<defs><linearGradient id="ink"><stop offset="0" stop-color="#000"/><stop offset=".4" stop-color="#333"/><stop offset="1" stop-color="#111"/></linearGradient></defs>';
            s += this.years() + this.hgrid([101, 143, 184, 226, 310, 352, 394, 436, 520, 561, 603, 645]);
            // retracement zones
            s += this.rect(465, 220, 1182, 307, 'rgba(0,255,0,.09)') + this.rect(465, 307, 1182, 377, 'rgba(80,80,220,.19)');
            s += this.area(pairs('1685 421 1712 427 1741 432 1782 439 1819 443 1819 482 1789 478 1756 473 1730 467 1685 457'), '#c0ffff');
            s += this.between(FAST, TRAIL, 4, 'rgba(0,140,0,.16)', 'rgba(255,40,40,.2)');
            s += this.line([[466, 81], [1181, 672]], '#ccc', 1, 'stroke-dasharray="1 4"');
            s += LONG.map(([c, p]) => this.line(pairs(p), c, 4, 'stroke-dasharray="7 7"')).join('');
            s += this.coloured(FAST, 4, 4, this.slope);
            s += this.line(TRAIL.map((v, i) => [qx(i + 4), v]), '#990000', 1.6, 'stroke-dasharray="5 4"');
            s += this.candles();
            s += this.level(220.5, '#66ee66', 1.4, 'stroke-dasharray="20 8"', 465, 1182);
            s += this.level(307.5, '#2020cc', 1, 'stroke-dasharray="20 8"', 465, 1182);
            s += this.level(377.5, '#e06a40', 1, 'stroke-dasharray="1 3"', 465, 1182);
            s += this.text(this.x(823), this.y(217), '76,40 %', 9, '#55dd55', 'middle');
            s += this.text(this.x(823), this.y(304), '61,80 %', 9, '#2020cc', 'middle');
            s += this.text(this.x(823), this.y(374), '50,00 %', 9, '#ff8855', 'middle');
            s += ['475 317 581 307', '855 395 1040 358', '1050 333 1075 302 1164 265'].map(p => this.line(pairs(p), red)).join('');
            s += ['925 489 953 515', '1499 590 1598 591 1704 638'].map(p => this.line(pairs(p), '#109010')).join('');
            s += pairs('1501 615 1510 607 1519 590 1562 579 1572 587 1581 588 1590 585 1599 608 1607 598 1616 631 1625 603 1634 591 1705 676 1714 652')
                .map(([a, b]) => `<circle cx="${this.x(a)}" cy="${this.y(b)}" r="3.5" fill="#cc8080"/>`).join('');
            s += this.line(pairs('236.5 81 236.5 207 245.5 164 306.5 500 315.5 433 377.5 673 643 264 900 487 953 533 1181 220'), blue, 1.2);
            s += this.line(pairs('1173 220 1181 298 1199 263 1218 540 1411 386 1703 674'), blue, 1.2);
            s += this.level(425, '#008000', 4, '', 27, 1877);
            s += [[244, 153, 2], [235, 218, 1], [315, 420, 4], [306, 512, 3], [377, 685, 5], [642, 252, 'A'], [952, 544, 'B'], [1181, 208, 'C'],
                [1181, 308, 1], [1198, 250, 2], [1216, 553, 3], [1411, 374, 4], [1702, 686, 5]].map(a => this.box(...a)).join('');
            s += [[483, 280, 'A'], [545, 495, 'B'], [616, 252, 'C'], [678, 520, 'A'], [863, 360, 'B'], [925, 543, 'C'],
                [1075, 273, 'A'], [1093, 402, 'B'], [1164, 209, 'C']].map(a => this.wave(...a)).join('');
            s += `<rect x="-.5" y="${this.y(410) + 0.5}" width="39" height="13" fill="#fff" stroke="#008000"/>` + this.text(2, this.y(421) + 1, '1,62600', 9, '#008000');
            s += this.text(10, 36, 'Q', 24, '#000') + this.text(10, 65, 'GBP/USD', 24, '#000');
            s += this.text(2, this.h - 2, 'IT-Finance.com - Tiempo Real', 10, '#111', 'start', 400);
            s += this.axis();
            for (let i = 0; i <= 15; i++) {
                if (i === 3) continue;
                const v = (1 + i / 10).toFixed(1).replace('.', ',').replace(',0', '');
                s += this.tick(687 - i * 41.8, v, 11);
            }
            s += this.tag(550, '1,31352', '#108010', 36) + this.tag(559, '1,30492', '#996600', 36) + this.tag(567, '1,30023', '#a01010', 36);
            return s;
        }
    }

    const TRAIN = nums(`773 758 743 735 730 726 720 719 722 727 734 731 726 720 731 755 782 791 791 792 798 798 797 793 791 790 791 793 794 797 787 775 755 740 727 721 722 725 725 724
        725 724 719 721 737 743 751 763 778 781 776 766 748 733 737 757 768 764 760 751 753 764 779 789 787 788 788 787 777 764 744 736 737 744 753 762 765 747 739 730
        741 741 739 734 730 732 749 775 775 772 767 773 780 779 780 783 783 779 774 754 734 716 721 723 725 719 719 722 730 731 728 731 745 767 782 779 755 738 725 717
        716 720 730 742 755 773 792 782 776 768 770 777 770 760 749 746 747 750 751 750 749 749 758 768 764 740 718 716 726 742 768 776 778 780 783 790 793 794 791 784
        774 762 752 748 749 760 767 777 782 778 770 760 756 738 725 721 728 732 743 758 776 777 769 753 750 745 740 732 724 732 740 740 730 727`);
    const TRAIN_SLOW = nums(`768 766 765 765 765 767 768 768 768 764 763 761 762 762 762 761 760 760 762 764 764 764 761 760 759 759 760 762 764 763 762 761 757 751 750 748 746 741 736 732
        734 733 731 731 739 746 748 745 739 728 721 715 715 717 722 726 734 757 777 781 776 768 771 778 779 778 773 772 772 774 774 774 772 771 774 776 776 771 766 762
        763 769 776 778 780 781 786 792 795 797 795 792 789 786 783 783 784 788 789 790 791 791 791 789 789 786 781 778 779 780 783 786 790 790 787 784 784 783 783 781 779 779 778 777 776 774`);
    const lag = (list, n) => list.map((_, i) => {
        const part = list.slice(Math.max(0, i - n + 1), i + 1);
        return part.reduce((a, b) => a + b, 0) / part.length;
    });
    const rising = (upC, downC) => (a, b, q, last) => b < a ? upC : b > a ? downC : last || upC;

    class TrainChart extends ChartPanel {
        static range = [704, 804];

        paint() {
            const fastLag = lag(TRAIN, 2), slowLag = lag(TRAIN_SLOW, 6);
            let s = this.years() + this.hgrid([747, 764]);
            s += this.rect(32, 713, 1819, 729, '#d9f5d9') + this.rect(32, 783, 1819, 800, '#fddcda');
            s += this.between(TRAIN, fastLag, 6, 'rgba(0,170,0,.22)', 'rgba(220,40,40,.3)');
            s += this.between(TRAIN_SLOW, slowLag, 74, 'rgba(30,30,180,.25)', 'rgba(200,40,200,.3)');
            // slow average under the lower band
            s += this.area(pairs('1464 780 1480 786 1499 797 1517 786 1534 782 1500 783'), 'rgba(120,40,20,.5)');
            s += this.area(pairs('1534 783 1562 784 1596 791 1632 791 1660 783'), 'rgba(120,40,20,.5)');
            s += this.area(pairs('1679 783 1700 790 1712 788 1719 783'), 'rgba(120,40,20,.5)');
            s += this.area(pairs('1146 729 1158 717 1166 715 1176 718 1188 729'), 'rgba(20,90,40,.45)');
            s += [712.5, 729.5, 782.5, 800.5].map(v => this.level(v, '#000')).join('');
            s += this.level(756.5, '#1010b0', 1.6, 'stroke-dasharray="5 5"');
            s += this.line(fastLag.map((v, i) => [qx(i + 6), v]), '#333', 1, 'stroke-dasharray="4 3"');
            s += this.coloured(TRAIN, 6, 1.6, rising('#000', '#d82020'));
            s += this.line(slowLag.map((v, i) => [qx(i + 74), v]), '#222', 3, 'stroke-dasharray="5 5"');
            s += this.coloured(TRAIN_SLOW, 74, 4, rising('#000099', '#ff0000'));
            s += this.marks(pairs('14 721 20 725 32 791 42 722 46 725 49 721 60 737 66 753 71 788 78 737 86 736 91 733 97 771 100 779 108 720 112 719 117 729 127 721 136 769 142 747 145 751 147 750 154 721 170 750 182 726 195 730'), 'dn', '#b80000');
            s += this.marks(pairs('17 733 27 798 36 794 44 725 47 725 56 779 63 767 70 789 73 788 83 757 87 742 94 776 99 780 103 781 111 722 115 732 121 781 133 789 138 774 144 751 146 750 150 766 164 792 175 780 188 772 198 735'), 'up', '#0000b8');
            s += this.axis() + this.tick(747, '60', 9);
            s += this.tag(727, '93,320', '#222', 30) + this.tag(768, '30,203', '#1010a0', 30) + this.tag(778, '25,994', '#222', 30);
            s += this.tag(712, '100', '#222', 17) + this.tag(734, '80', '#222', 12) + this.tag(756, '50', '#1010c0', 12) + this.tag(783, '20', '#222', 12) + this.tag(797, '0', '#222', 7);
            return s;
        }
    }

    const WILLY = nums(`856 853 850 849 848 845 848 848 847 842 841 832 832 836 840 838 840 845 843 843 842 838 833 831 833 833 825 819 826 815 821 836 837 838 838 839 838 836 833 834
        834 841 846 848 851 850 849 838 843 841 844 843 841 840 837 841 845 848 843 844 848 854 856 855 861 861 854 856 859 849 838 829 832 822 820 812 816 819 820 814
        815 824 828 831 830 819 817 813 812 811 812 819 819 818 834 855 857 843 846 845 852 853 848 848 846 846 849 849 847 848 845 845 851 852 844 842 841 839 844 849
        853 849 853 855 858 862 862 861 860 857 855 853 850 854 852 854 852 855 859 850 854 854 850 842 841 841 844 844 847 855 857 849 847 845 849 845 845 845 838 843 838 830 831 828`);
    const BANDS = `r42 g47 D49 r50 g51 D52 r53 r55 g58 b59 b61-63 b65 D67 r69 r71 g73 b74 D77 r78-80 g83 D84 r86 r89 r91-93 r95-98 r100 r103-104 g107
        b109-111 b115 b120-125 b129 D131 r132 r134 r136-137 r139 r142-143 r145 r148 r154-156 r158-162 r169 r171 r173-174 r176-177 r182 r184-186
        r190 r192 g194 D195 g197 b199`.split(/\s+/);

    class WillyChart extends ChartPanel {
        static range = [805, 866];

        paint() {
            const fill = { r: '#fca4a4', g: '#68c068', D: '#c06868', b: '#c0c0fa' };
            let s = this.years();
            s += BANDS.map(b => {
                const [from, to = from] = b.slice(1).split('-').map(Number);
                return this.rect(qx(from - 0.5), 805, qx(to + 0.5), 866, fill[b[0]]);
            }).join('');
            const base = WILLY.map(v => v > 850 ? 850 : v < 824 ? 824 : v);
            s += this.between(WILLY, base, 36, 'rgba(0,150,0,.25)', 'rgba(110,30,30,.45)');
            s += this.level(809.5, '#000', 1, 'stroke-dasharray="5 4"') + this.level(863.5, '#000', 1, 'stroke-dasharray="5 4"');
            s += this.level(836.5, '#101090', 1.6, 'stroke-dasharray="5 5"');
            s += this.level(823.5, '#8080c0', 3) + this.level(823.5, '#000080', 1);
            s += this.level(850.5, '#f07070', 3) + this.level(850.5, '#c00000', 1.4);
            s += this.coloured(WILLY, 36, 3.6, (a, b) => {
                if (a + b < 1647) return '#00c800';
                if (a + b > 1701) return '#900000';
                return b < a ? '#0000c8' : '#ff9808';
            });
            s += this.marks(pairs('46 837 50 837 57 837 72 837 82 837 106 837 193 837 196 838'), 'up', '#0000b8', 6);
            s += this.marks(pairs('48 836 51 836 66 836 77 836 83 836 130 836 194 836'), 'dn', '#b80000', 6);
            s += this.axis();
            s += this.tag(822, '-25', '#101090', 15) + this.tag(828, '-25,397', '#1010c0', 32) + this.tag(850, '-75', '#d00000', 15) + this.tag(836, '-50', '#101090', 15);
            s += this.tag(811, '0', '#222', 7) + this.tag(859, '-100', '#222', 20);
            return s;
        }
    }

    const AWE = nums(`924 918 913 907 902 897 895 894 892 887 885 880 872 873 880 882 882 887 892 894 894 893 887 884 884 893 895 892 889 889 889 899 905 907 907 907 906 905 903 899
        897 896 896 896 896 896 894 890 889 889 890 890 890 889 889 889 892 894 896 895 896 899 902 903 904 905 904 902 901 899 896 892 891 890 888 886 880 878 880 879
        877 882 883 889 891 890 889 886 885 884 882 882 885 887 890 901 914 914 909 909 909 911 910 907 903 901 901 900 900 898 897 896 898 898 896 892 890 889 889 893
        896 895 896 898 901 904 907 911 911 909 906 903 900 900 901 900 900 901 899 899 898 899 897 894 892 891 891 891 892 896 899 902 899 897 897 896 895 894 893 893 893 892 890 890`);
    const AWE_SLOW = nums(`914 916 916 916 919 922 925 926 926 923 920 915 912 910 909 906 903 900 895 891 890 887 887 887 889 889 890 891 889 884 883 881 881 881 883 885 885 886 889 892
        896 901 902 902 902 901 900 899 899 899 900 900 900 899 898 896 895 894 894 894 893 893 893 893 893 894 894 895 896 897 899 900 901 901 901 901 901 899 897 895
        893 892 889 887 884 882 881 881 882 883 884 885 886 883 882 880 879 878 877 878 880 886 892 898 901 904 905 904 905 905 906 905 903 903 903 903 903 902 902 901
        901 900 899 898 897 896 897 898 899 900 901 901 902 904 906 909 909 908 905 903 903 903 903 903 905 905 904 904 904 902 900 899 898 897 896 896 898 900 901 901 900 899 898 897 896 896 895 895 894 894`);

    class AwesomeChart extends ChartPanel {
        static range = [867, 928];

        bars(list, from, pick) {
            const zero = this.y(894);
            return list.map((v, i) => {
                if (!i) return '';
                const a = Math.floor(this.q(from + i)) - 3, b = this.y(v);
                return `<rect x="${a}" y="${Math.min(zero, b)}" width="7" height="${Math.abs(b - zero)}" fill="${pick(list[i - 1], v)}"/>`;
            }).join('');
        }

        paint() {
            let s = this.years() + this.hgrid([923]);
            s += this.bars(AWE_SLOW, 30, (a, b) => b < a ? '#ccffcc' : '#ffcccc');
            s += this.bars(AWE, 36, (a, b) => b < 894 ? (b <= a ? '#1010ff' : '#ff00f0') : (b > a ? '#ff1010' : '#009898'));
            s += this.level(894.5, '#2020ff', 2);
            s += this.coloured(AWE, 36, 3.6, rising('#000030', '#b000b0'));
            s += this.coloured(AWE_SLOW, 30, 3.6, rising('#66ff66', '#ff9808'));
            s += this.marks(pairs('53 887 60 884 93 894 118 885 157 898 160 901 186 900'), 'dn', '#ffee00');
            s += this.marks(pairs('37 921 58 889 74 902 105 901 140 905 158 898 166 907 188 901'), 'up', '#00f0f0');
            s += this.axis() + this.tick(922, '-0,5', 9);
            s += this.tag(883, '0,0782', '#b000b0', 30) + this.tag(893, '0,0192', '#55dd55', 30) + this.tag(900, '0', '#ff00f0', 7);
            return s;
        }
    }

    const STRONG = pairs(`9.5 18.5 19.5 23.5 35.5 38.5 43.5 44.5 46.5 49.5 50.5 54.5 57.5 68.5 82.5 84.5 85.5 87.5 96.5 100.5 107.5 115.5 116.5 118.5
        120.5 121.5 122.5 123.5 126.5 128.5 129.5 134.5 147.5 148.5 149.5 150.5 156.5 157.5 160.5 163.5 168.5 169.5 174.5 178.5 184.5 188.5 195.5 197.5`);

    class StrengthChart extends ChartPanel {
        static range = [929, 995];

        paint() {
            let s = this.years() + this.rect(30, 929, 1823, 995, '#ffff88');
            s += STRONG.map(([a, b]) => this.rect(qx(a), 929, qx(b), 995, '#40ff40')).join('');
            s += this.level(963.5, '#000');
            s += this.axis() + this.tick(934, '0,505', 9) + this.tick(991, '0,495', 9) + this.tag(963, '0,5000', '#111', 30);
            return s;
        }
    }

    class DateAxis extends ChartPanel {
        static range = [996, 1011];

        connectedCallback() {
            super.connectedCallback();
            this.style.flex = 'none';
            this.style.height = '15px';
            this.style.border = '0';
        }

        paint() {
            let s = '';
            for (let y = 1976; y <= 2026; y += 2) {
                const a = Math.floor(this.q((y - 1976) * 4)) + 0.5;
                s += `<path d="M${a} 0v3" stroke="#78909c"/>`;
                if (y !== 2024) s += this.text(a, 12, y, 9, '#111', 'middle');
            }
            const a = Math.round(this.x(1756));
            s += `<rect x="${a - 21.5}" y="2.5" width="43" height="12" fill="#ffff20" stroke="#999"/>`;
            return s + this.text(a, 12, 'ene 2024', 10, '#111', 'middle', 400);
        }
    }

    class ChartApp extends HTMLElement {
        connectedCallback() {
            this.attachShadow({ mode: 'open' }).innerHTML = `
                <style>
                    :host { display: flex; flex-direction: column; height: 100vh; }
                    main { display: flex; flex: 1; min-height: 0; }
                    section { display: flex; flex-direction: column; flex: 1; min-width: 0; }
                    .back {
                        display: block;
                        width: 15px;
                        height: 15px;
                        margin: 0;
                        padding: 0;
                        border: 0;
                        background: #3068c8;
                        font: 14px/12px "Liberation Sans", Arial, sans-serif;
                        color: #fff;
                    }
                    .mini { width: 12px; height: 22px; }
                </style>
                <top-bar></top-bar>
                <main>
                    <side-tools></side-tools>
                    <section>
                        <price-chart>
                            <legend-item><app-icon class="mini" name="sheetDown"></app-icon><app-icon class="mini" name="sheetUp"></app-icon></legend-item>
                            <legend-item check>Precio</legend-item>
                            <legend-item><app-icon class="mini" name="list"></app-icon></legend-item>
                            <legend-item check>Cierre (W)</legend-item>
                            <legend-item swatch="#78909c">Tunel Domenec v4 (t t t t t)</legend-item>
                            <legend-item swatch="linear-gradient(90deg,#f02020 25%,#202020 25% 40%,#f0e020 40% 60%,#20d020 60% 80%,#ff20e0 80%)">Control Total Doc v.6</legend-item>
                            <legend-item swatch="#000">Multi Avisos (3 f 3 1,5 70 f f)</legend-item>
                        </price-chart>
                        <train-chart><legend-item swatch="linear-gradient(90deg,#78909c 50%,#000 50%)">Sistema de trenes Doc v4 (f f)</legend-item></train-chart>
                        <willy-chart><legend-item swatch="#78909c">Willy Doc (t)</legend-item></willy-chart>
                        <awesome-chart><legend-item swatch="#78909c">Awesome Evolution Doc</legend-item></awesome-chart>
                        <strength-chart><legend-item swatch="linear-gradient(90deg,#000 50%,#78909c 50%)">Barra Fuerza Fondo Mercado v4 (f)</legend-item></strength-chart>
                        <date-axis><button class="back" aria-label="Retroceder">«</button></date-axis>
                    </section>
                </main>
                <bottom-bar></bottom-bar>
            `;
        }
    }

    customElements.define('app-icon', AppIcon);
    customElements.define('tool-button', ToolButton);
    customElements.define('tool-select', ToolSelect);
    customElements.define('top-bar', TopBar);
    customElements.define('side-tools', SideTools);
    customElements.define('bottom-bar', BottomBar);
    customElements.define('legend-item', LegendItem);
    customElements.define('price-chart', PriceChart);
    customElements.define('train-chart', TrainChart);
    customElements.define('willy-chart', WillyChart);
    customElements.define('awesome-chart', AwesomeChart);
    customElements.define('strength-chart', StrengthChart);
    customElements.define('date-axis', DateAxis);
    customElements.define('chart-app', ChartApp);
</script>
</body>
</html>
